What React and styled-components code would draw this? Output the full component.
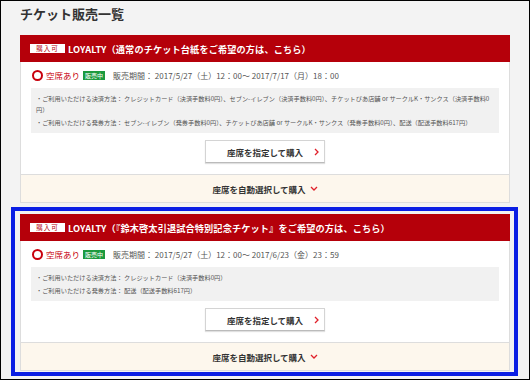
import styled, { createGlobalStyle } from "styled-components"

const GlobalStyle = createGlobalStyle`
  * { box-sizing: border-box; }
  body {
    margin: 0;
    font-family: "Noto Sans CJK JP", "Noto Sans", sans-serif;
  }
`

const Frame = styled.div`
  width: 530px;
  height: 380px;
  border: 1px solid #000;
  background: #f3f3f3;
  padding: 5px 19px 0 19px;
  overflow: hidden;
`

const PageTitle = styled.h1`
  margin: 0 0 13px 0;
  font-size: 13px;
  line-height: 16px;
  font-weight: 700;
  color: #333;
`

const Highlight = styled.div`
  margin: 4px -8px 0 -9px;
  border: 4px solid #0a1ee4;
  padding: 3px 4px 1px 5px;
`

const Card = styled.div`
  background: #fff;
  border: 1px solid #ddd;
`

const Header = styled.div`
  height: 27px;
  margin: -1px -1px 0 -1px;
  background: #b5000a;
  display: flex;
  align-items: center;
  gap: 3px;
  padding: 0 10px;
`

const BuyBadge = styled.span`
  width: 35px;
  height: 9px;
  background: #fff;
  color: #b5000a;
  font-size: 6.5px;
  line-height: 9px;
  text-align: center;
  letter-spacing: 1px;
`

const HeaderText = styled.span`
  color: #fff;
  font-size: 9.2px;
  font-weight: 700;
  letter-spacing: 0.1px;
  white-space: nowrap;
`

const StatusRow = styled.div`
  height: 26px;
  padding: 0 10px 0 11px;
  display: flex;
  align-items: center;
`

const Circle = styled.span`
  width: 11px;
  height: 11px;
  border: 2px solid #c8000c;
  border-radius: 50%;
`

const Vacancy = styled.span`
  margin-left: 3px;
  color: #c8000c;
  font-size: 8.5px;
`

const SaleBadge = styled.span`
  margin-left: 3px;
  width: 22px;
  height: 9px;
  background: #1c9a3e;
  color: #fff;
  font-size: 6px;
  line-height: 9px;
  text-align: center;
`

const Period = styled.span`
  margin-left: 8px;
  color: #555;
  font-size: 8px;
  white-space: nowrap;
`

const Body = styled.div`
  padding: 0 10px;
`

const InfoBox = styled.ul`
  margin: 0;
  list-style: none;
  background: #f1f1f1;
  padding: 5px 6px 5px 5px;
  color: #555;
  font-size: 6.2px;
  line-height: 11px;

  li + li { margin-top: 2px; }
`

const ButtonRow = styled.div`
  display: flex;
  justify-content: center;
  padding: 7px 0 11px;
`

const SelectButton = styled.button`
  width: 120px;
  height: 23px;
  display: grid;
  grid-template-columns: 1fr auto 1fr;
  align-items: center;
  padding: 0 5px;
  background: #fff;
  border: 1px solid #d4d4d4;
  border-bottom-color: #bbb;
  box-shadow: 0 1px 1px rgba(0, 0, 0, 0.12);
  font-family: inherit;
  font-size: 8.5px;
  font-weight: 700;
  color: #333;

  span { grid-column: 2; }
  svg { grid-column: 3; justify-self: end; }
`

const AutoFooter = styled.div`
  height: 28px;
  border-top: 1px solid #ddd;
  background: #fdf7ed;
  display: flex;
  align-items: center;
  justify-content: center;
  gap: 4px;
  font-size: 8.5px;
  font-weight: 700;
  color: #333;
`

const ChevronRight = () => (
  <svg width="5" height="8" viewBox="0 0 5 8">
    <path d="M1 1l3 3-3 3" fill="none" stroke="#e0202a" strokeWidth="1.3" />
  </svg>
)

const ChevronDown = () => (
  <svg width="8" height="5" viewBox="0 0 8 5">
    <path d="M1 1l3 3 3-3" fill="none" stroke="#e0202a" strokeWidth="1.3" />
  </svg>
)

const TicketCard = ({ title, period, info }) => (
  <Card>
    <Header>
      <BuyBadge>購入可</BuyBadge>
      <HeaderText>{title}</HeaderText>
    </Header>
    <StatusRow>
      <Circle />
      <Vacancy>空席あり</Vacancy>
      <SaleBadge>販売中</SaleBadge>
      <Period>{period}</Period>
    </StatusRow>
    <Body>
      <InfoBox>
        {info.map((line) => (
          <li key={line}>{line}</li>
        ))}
      </InfoBox>
      <ButtonRow>
        <SelectButton>
          <span>座席を指定して購入</span>
          <ChevronRight />
        </SelectButton>
      </ButtonRow>
    </Body>
    <AutoFooter>
      座席を自動選択して購入
      <ChevronDown />
    </AutoFooter>
  </Card>
)

const tickets = [
  {
    title: "LOYALTY（通常のチケット台紙をご希望の方は、こちら）",
    period: "販売期間： 2017/5/27（土）12：00～ 2017/7/17（月）18：00",
    info: [
      "・ご利用いただける決済方法： クレジットカード（決済手数料0円）、セブン-イレブン（決済手数料0円）、チケットぴあ店舗 or サークルK・サンクス（決済手数料0円）",
      "・ご利用いただける発券方法： セブン-イレブン（発券手数料0円）、チケットぴあ店舗 or サークルK・サンクス（発券手数料0円）、配送（配送手数料617円）",
    ],
  },
  {
    title: "LOYALTY（『鈴木啓太引退試合特別記念チケット』をご希望の方は、こちら）",
    period: "販売期間： 2017/5/27（土）12：00～ 2017/6/23（金）23：59",
    info: [
      "・ご利用いただける決済方法： クレジットカード（決済手数料0円）",
      "・ご利用いただける発券方法： 配送（配送手数料617円）",
    ],
  },
]

export default function App() {
  return (
    <>
      <GlobalStyle />
      <Frame>
        <PageTitle>チケット販売一覧</PageTitle>
        <TicketCard {...tickets[0]} />
        <Highlight>
          <TicketCard {...tickets[1]} />
        </Highlight>
      </Frame>
    </>
  )
}
